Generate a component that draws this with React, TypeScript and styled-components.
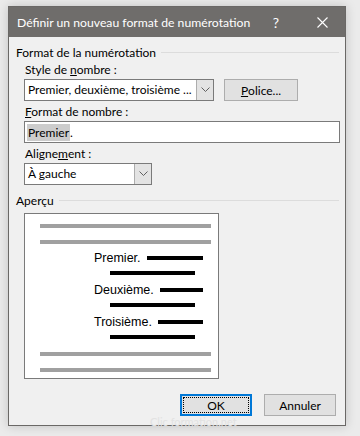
import React from 'react'
import styled, { createGlobalStyle } from 'styled-components'

const GlobalStyle = createGlobalStyle`
    html, body {
        margin: 0;
        padding: 0;
        background: #ebebeb;
        font-family: Lato, "Noto Sans", sans-serif;
        font-size: 12px;
        color: #000;
    }
`;

const StyledPage = styled.div`
    width: 360px;
    height: 436px;
    padding: 6px 0 0 8px;
    box-sizing: border-box;
`;

const StyledDialog = styled.div`
    position: relative;
    width: 338px;
    height: 420px;
    box-sizing: border-box;
    border: 1px solid #6a6866;
    background: #f0f0f0;
    display: flex;
    flex-direction: column;
    box-shadow: 0 0 10px rgba(0,0,0,0.18);
`;

const StyledTitleBar = styled.div`
    height: 30px;
    background: #6f6d6b;
    color: #fff;
    display: flex;
    align-items: center;
    padding-left: 8px;
    font-size: 12.2px;
    flex-shrink: 0;
`;

const StyledTitle = styled.div`
    flex: 1;
    white-space: nowrap;
    min-width: 0;
`;

const StyledTitleButton = styled.div`
    width: 46px;
    height: 30px;
    flex-shrink: 0;
    display: flex;
    align-items: center;
    justify-content: center;
    font-size: 14px;
`;

const StyledBody = styled.div`
    flex: 1;
    display: flex;
    flex-direction: column;
    padding: 7px 6px 0 7px;
`;

const StyledGroupHeader = styled.div`
    display: flex;
    align-items: center;
    height: 16px;
    & > span { white-space: nowrap; }
    &::after {
        content: '';
        flex: 1;
        height: 1px;
        margin-left: 5px;
        background: #dcdcdc;
    }
`;

const StyledField = styled.div`
    padding-left: 8px;
    display: flex;
    flex-direction: column;
`;

const StyledLabel = styled.div`
    height: 16px;
    line-height: 16px;
    margin-top: ${p => p.top}px;
    margin-bottom: 1px;
    padding-left: 1px;
`;

const StyledRow = styled.div`
    display: flex;
    gap: 10px;
    align-items: center;
`;

const StyledSelect = styled.div`
    width: ${p => p.width}px;
    height: 22px;
    box-sizing: border-box;
    border: 1px solid #7a7a7a;
    background: #fff;
    display: flex;
    align-items: stretch;
`;

const StyledSelectText = styled.div`
    flex: 1;
    padding-left: 3px;
    line-height: 20px;
    white-space: nowrap;
    overflow: hidden;
`;

const StyledSelectArrow = styled.div`
    width: 16px;
    flex-shrink: 0;
    background: #e3e3e3;
    border-left: 1px solid #adadad;
    display: flex;
    align-items: center;
    justify-content: center;
`;

const StyledButton = styled.div`
    width: ${p => p.width}px;
    height: 22px;
    box-sizing: border-box;
    border: ${p => p.focused ? '2px solid #0078d7' : '1px solid #adadad'};
    background: #e1e1e1;
    display: flex;
    align-items: center;
    justify-content: center;
    padding: ${p => p.focused ? '1px' : '2px'};
`;

const StyledButtonInner = styled.div`
    flex: 1;
    align-self: stretch;
    display: flex;
    align-items: center;
    justify-content: center;
    border: 1px ${p => p.focused ? 'dotted #000' : 'solid transparent'};
`;

const StyledInput = styled.div`
    width: 316px;
    height: 22px;
    box-sizing: border-box;
    border: 1px solid #7a7a7a;
    background: #fff;
    padding-left: 2px;
    display: flex;
    align-items: center;
`;

const StyledSelection = styled.span`
    background: #cccccc;
    padding: 1px 1px;
`;

const StyledPreview = styled.div`
    margin: 5px 0 0 8px;
    width: 195px;
    height: 166px;
    box-sizing: border-box;
    border: 1px solid #7a7a7a;
    background: #fff;
    display: flex;
    flex-direction: column;
    padding: 10px 7px 0 15px;
    font-family: "Liberation Sans", Arial, sans-serif;
    font-size: 12.5px;
`;

const StyledGrayLine = styled.div`
    height: 4px;
    background: #a0a0a0;
    margin-top: ${p => p.top || 0}px;
`;

const StyledItem = styled.div`
    margin: ${p => p.top}px 0 0 54px;
    width: 109px;
    display: flex;
    flex-direction: column;
`;

const StyledItemRow = styled.div`
    height: 14px;
    display: flex;
    align-items: center;
    white-space: nowrap;
    &::after {
        content: '';
        flex: 1;
        height: 4px;
        margin-left: 6px;
        background: #000;
    }
`;

const StyledSubLine = styled.div`
    margin: 6px 0 0 16px;
    width: 85px;
    height: 4px;
    background: #000;
`;

const StyledFooter = styled.div`
    display: flex;
    justify-content: flex-end;
    gap: 12px;
    margin: 15px 3px 0 0;
`;

const StyledWatermark = styled.div`
    position: absolute;
    left: 141px;
    bottom: -3px;
    font-size: 11px;
    color: #e2e2e2;
`;

const Chevron = () => (
    <svg width="9" height="6" viewBox="0 0 9 6">
        <path d="M0.5 0.5 L4.5 4.5 L8.5 0.5" fill="none" stroke="#606060" strokeWidth="1" />
    </svg>
);

const CloseIcon = () => (
    <svg width="11" height="11" viewBox="0 0 11 11">
        <path d="M0.5 0.5 L10.5 10.5 M10.5 0.5 L0.5 10.5" stroke="#fff" strokeWidth="1.1" />
    </svg>
);

const items = ['Premier.', 'Deuxième.', 'Troisième.'];

export default function App() {
    return (
        <StyledPage>
            <GlobalStyle />
            <StyledDialog>
                <StyledTitleBar>
                    <StyledTitle>Définir un nouveau format de numérotation</StyledTitle>
                    <StyledTitleButton>?</StyledTitleButton>
                    <StyledTitleButton><CloseIcon /></StyledTitleButton>
                </StyledTitleBar>
                <StyledBody>
                    <StyledGroupHeader><span>Format de la numérotation</span></StyledGroupHeader>
                    <StyledField>
                        <StyledLabel top={2}>Style de <u>n</u>ombre :</StyledLabel>
                        <StyledRow>
                            <StyledSelect width={190}>
                                <StyledSelectText>Premier, deuxième, troisième ...</StyledSelectText>
                                <StyledSelectArrow><Chevron /></StyledSelectArrow>
                            </StyledSelect>
                            <StyledButton width={74}>
                                <StyledButtonInner><u>P</u>olice...</StyledButtonInner>
                            </StyledButton>
                        </StyledRow>
                        <StyledLabel top={3}><u>F</u>ormat de nombre :</StyledLabel>
                        <StyledInput>
                            <span><StyledSelection>Premier</StyledSelection>.</span>
                        </StyledInput>
                        <StyledLabel top={3}>Aligne<u>m</u>ent :</StyledLabel>
                        <StyledSelect width={128}>
                            <StyledSelectText>À gauche</StyledSelectText>
                            <StyledSelectArrow><Chevron /></StyledSelectArrow>
                        </StyledSelect>
                    </StyledField>
                    <div style={{ height: 7 }} />
                    <StyledGroupHeader><span>Aperçu</span></StyledGroupHeader>
                    <StyledPreview>
                        <StyledGrayLine />
                        <StyledGrayLine top={12} />
                        {items.map((label, i) => (
                            <StyledItem key={label} top={i === 0 ? 7 : 8}>
                                <StyledItemRow>{label}</StyledItemRow>
                                <StyledSubLine />
                            </StyledItem>
                        ))}
                        <StyledGrayLine top={13} />
                        <StyledGrayLine top={12} />
                    </StyledPreview>
                    <StyledFooter>
                        <StyledButton width={72} focused>
                            <StyledButtonInner focused>OK</StyledButtonInner>
                        </StyledButton>
                        <StyledButton width={72}>
                            <StyledButtonInner>Annuler</StyledButtonInner>
                        </StyledButton>
                    </StyledFooter>
                </StyledBody>
                <StyledWatermark>Clic formation.net</StyledWatermark>
            </StyledDialog>
        </StyledPage>
    )
}
